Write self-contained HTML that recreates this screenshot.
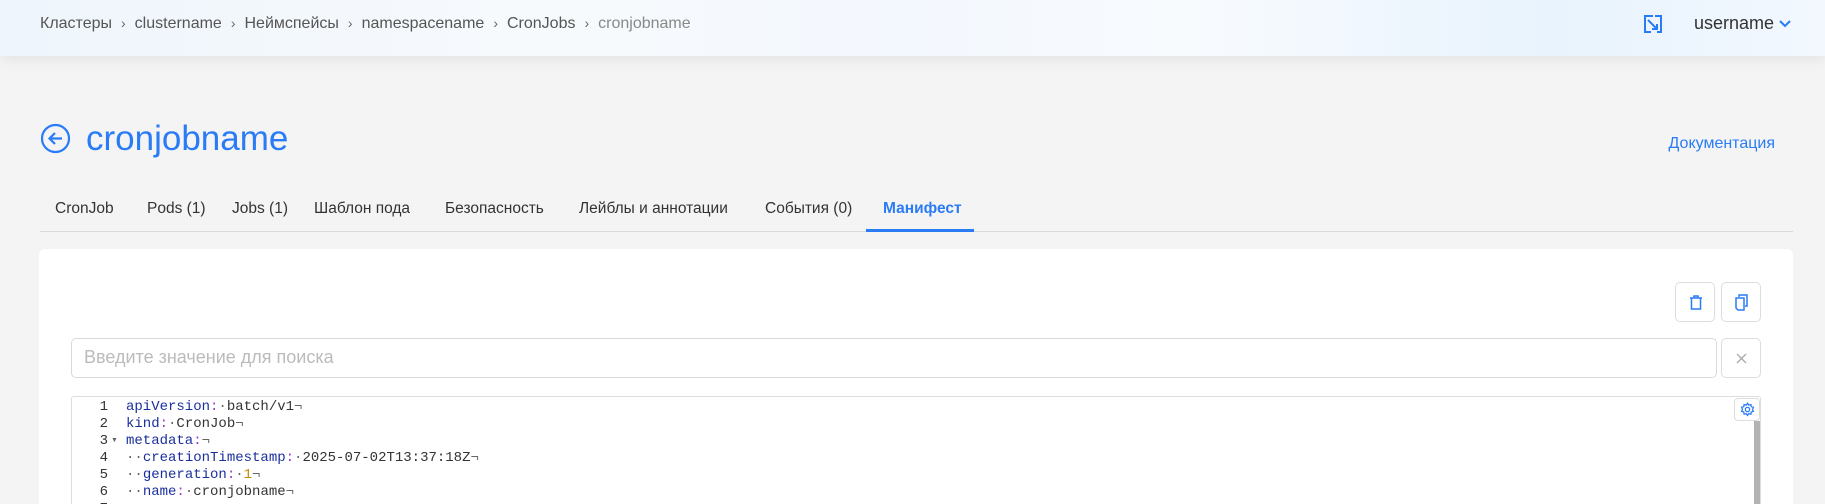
<!DOCTYPE html>
<html style="overflow:hidden;height:504px"><head><meta charset="utf-8"><style>
*{box-sizing:border-box;margin:0;padding:0}
body{width:1825px;height:504px;overflow:hidden;background:#f4f4f4;font-family:"Liberation Sans",sans-serif;position:relative}
.hdr{position:absolute;left:0;top:0;width:1825px;height:56px;background:linear-gradient(90deg,#eef5fc 0%,#f7fafd 30%,#f3f8fe 50%,#f8fbfe 65%,#e8f3fd 85%,#f2f8fe 100%);box-shadow:0 3px 14px rgba(0,0,0,0.08)}
.bc{position:absolute;left:40px;top:15px;font-size:16px;color:#555;white-space:nowrap}
.bc span.s{color:#666;margin:0 9px;font-size:14px}
.bc .last{color:#888}
.user{position:absolute;left:1694px;top:13px;font-size:18px;color:#333}
.title{position:absolute;left:86px;top:117px;font-size:35px;color:#2a7bf6;line-height:44px}
.doc{position:absolute;right:50px;top:135px;font-size:16px;color:#2a7bf6}
.tab{position:absolute;top:200px;font-size:15.5px;color:#333;white-space:nowrap}
.card{position:absolute;left:39px;top:249px;width:1754px;height:255px;background:#fff;border-radius:6px 6px 0 0}
.btn{position:absolute;width:40px;height:40px;border:1px solid #ddd;border-radius:5px;background:#fff}
.inp{position:absolute;left:71px;top:338px;width:1646px;height:40px;border:1px solid #d9d9d9;border-radius:5px;font-size:18px;color:#bbb;padding:8px 12px}
.ed{position:absolute;left:71px;top:396px;width:1690px;height:108px;border:1px solid #ddd;border-bottom:none;border-radius:3px 3px 0 0;background:#fff;overflow:hidden}
.ln{position:absolute;left:0;width:36px;text-align:right;font-family:"Liberation Mono",monospace;font-size:14px;color:#333}
.cd{position:absolute;left:54px;font-family:"Liberation Mono",monospace;font-size:14px;color:#333;white-space:pre}
.k{color:#1a2f9e}.p{color:#9b3ad0}.d{color:#666}.n{color:#c78a00}
</style></head><body>
<div class="hdr">
<div class="bc">Кластеры<span class="s">›</span>clustername<span class="s">›</span>Неймспейсы<span class="s">›</span>namespacename<span class="s">›</span>CronJobs<span class="s">›</span><span class="last">cronjobname</span></div>
<svg style="position:absolute;left:1643px;top:14px" width="20" height="20" viewBox="0 0 20 20" fill="none" stroke="#2a7bf6" stroke-width="2"><path d="M10 2H2v16h6M12 2h6v16h-4M5 6l9 9M14 10v5h-5"/></svg>
<div class="user">username <svg width="12" height="10" viewBox="0 0 12 10"><path d="M1 2l5 5 5-5" fill="none" stroke="#2a7bf6" stroke-width="2"/></svg></div>
</div>
<svg style="position:absolute;left:40px;top:123px" width="31" height="31" viewBox="0 0 31 31" fill="none" stroke="#2a7bf6" stroke-width="2.2"><circle cx="15.5" cy="15.5" r="13.5"/><path d="M22 15.5H10M15 10l-5.5 5.5L15 21"/></svg>
<div class="title">cronjobname</div>
<div class="doc">Документация</div>
<div class="tab" style="left:55px">CronJob</div>
<div class="tab" style="left:147px">Pods (1)</div>
<div class="tab" style="left:232px">Jobs (1)</div>
<div class="tab" style="left:314px">Шаблон пода</div>
<div class="tab" style="left:445px">Безопасность</div>
<div class="tab" style="left:579px">Лейблы и аннотации</div>
<div class="tab" style="left:765px">События (0)</div>
<div class="tab" style="left:883px;color:#2a7bf6;font-weight:bold">Манифест</div>
<div style="position:absolute;left:40px;top:231px;width:1753px;height:1px;background:#d8d8d8"></div>
<div style="position:absolute;left:866px;top:229px;width:108px;height:3px;background:#2a7bf6"></div>
<div class="card"></div>
<div class="btn" style="left:1675px;top:282px"><svg style="position:absolute;left:13px;top:12px" width="14" height="15" viewBox="0 0 14 15" fill="none" stroke="#2a7bf6" stroke-width="1.5"><path d="M1 3h12M5 3V1h4v2M2.5 3v11h9V3"/></svg></div>
<div class="btn" style="left:1721px;top:282px"><svg style="position:absolute;left:13px;top:11px" width="14" height="17" viewBox="0 0 14 17" fill="none" stroke="#2a7bf6" stroke-width="1.5"><path d="M4 3V1h8v11h-2"/><path d="M1 4h8v12H3L1 14z"/></svg></div>
<div class="inp">Введите значение для поиска</div>
<div class="btn" style="left:1721px;top:338px"><svg style="position:absolute;left:14px;top:14px" width="11" height="11" viewBox="0 0 11 11" stroke="#aaa" stroke-width="1.3"><path d="M1 1l9 9M10 1l-9 9"/></svg></div>
<div class="ed">
<div style="position:absolute;left:1682px;top:24px;width:7px;height:90px;background:#b3b3b3"></div>
<div style="position:absolute;left:1662px;top:1px;width:26px;height:23px;border:1px solid #ddd;border-radius:4px;background:#fff"><svg style="position:absolute;left:5px;top:3px" width="15" height="15" viewBox="0 0 24 24" fill="none" stroke="#2a7bf6" stroke-width="2"><circle cx="12" cy="12" r="3.5"/><path d="M12 2l2 3 3.5-1 .5 3.5 3.5 1-1.5 3.5 1.5 3-3.5 1-.5 3.5-3.5-1-2 3-2-3-3.5 1-.5-3.5-3.5-1 1.5-3-1.5-3.5 3.5-1 .5-3.5 3.5 1z"/></svg></div>
<div class="ln" style="top:2px">1</div><div class="cd" style="top:2px"><span class="k">apiVersion</span><span class="p">:</span><span class="d">·</span>batch/v1<span class="d">¬</span></div>
<div class="ln" style="top:19px">2</div><div class="cd" style="top:19px"><span class="k">kind</span><span class="p">:</span><span class="d">·</span>CronJob<span class="d">¬</span></div>
<div class="ln" style="top:36px">3</div><div style="position:absolute;left:39px;top:40px;font-size:7px;color:#666">▼</div><div class="cd" style="top:36px"><span class="k">metadata</span><span class="p">:</span><span class="d">¬</span></div>
<div class="ln" style="top:53px">4</div><div class="cd" style="top:53px"><span class="d">··</span><span class="k">creationTimestamp</span><span class="p">:</span><span class="d">·</span>2025-07-02T13:37:18Z<span class="d">¬</span></div>
<div class="ln" style="top:70px">5</div><div class="cd" style="top:70px"><span class="d">··</span><span class="k">generation</span><span class="p">:</span><span class="d">·</span><span class="n">1</span><span class="d">¬</span></div>
<div class="ln" style="top:87px">6</div><div class="cd" style="top:87px"><span class="d">··</span><span class="k">name</span><span class="p">:</span><span class="d">·</span>cronjobname<span class="d">¬</span></div>
<div class="ln" style="top:104px">7</div>
</div>
</body></html>
